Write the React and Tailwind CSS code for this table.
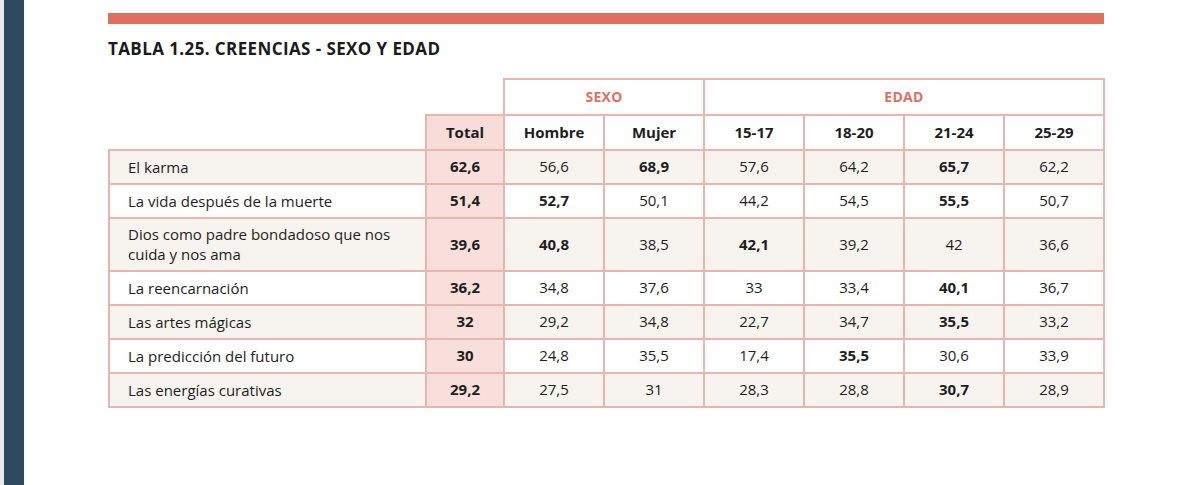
import React from 'react';

const rows = [
  { label: 'El karma', total: '62,6', vals: ['56,6', '68,9', '57,6', '64,2', '65,7', '62,2'], bold: [1, 4] },
  { label: 'La vida después de la muerte', total: '51,4', vals: ['52,7', '50,1', '44,2', '54,5', '55,5', '50,7'], bold: [0, 4] },
  { label: 'Dios como padre bondadoso que nos cuida y nos ama', total: '39,6', vals: ['40,8', '38,5', '42,1', '39,2', '42', '36,6'], bold: [0, 2], tall: true },
  { label: 'La reencarnación', total: '36,2', vals: ['34,8', '37,6', '33', '33,4', '40,1', '36,7'], bold: [4] },
  { label: 'Las artes mágicas', total: '32', vals: ['29,2', '34,8', '22,7', '34,7', '35,5', '33,2'], bold: [4] },
  { label: 'La predicción del futuro', total: '30', vals: ['24,8', '35,5', '17,4', '35,5', '30,6', '33,9'], bold: [3] },
  { label: 'Las energías curativas', total: '29,2', vals: ['27,5', '31', '28,3', '28,8', '30,7', '28,9'], bold: [4] },
];

const cols = ['Hombre', 'Mujer', '15-17', '18-20', '21-24', '25-29'];

export default function App() {
  return (
    <div className="w-[1200px] h-[485px] bg-white flex overflow-hidden" style={{ fontFamily: '"Open Sans", "Noto Sans", sans-serif' }}>
      <div className="w-[4px] bg-[#e9ecee]" />
      <div className="w-[20px] bg-[#2f4a5e]" />
      <div className="flex-1 pl-[84px] pt-[13px]">
        <div className="w-[996px] h-[11px] bg-[#df6f5f]" />
        <h2 className="mt-[12px] text-[17px] font-bold text-[#1b1b1b] tracking-[0.4px]">TABLA 1.25. CREENCIAS - SEXO Y EDAD</h2>
        <table className="mt-[16px] w-[995px] border-collapse text-[15px] text-[#1e1e1e] table-fixed">
          <colgroup>
            <col className="w-[317px]" />
            <col className="w-[78px]" />
            <col className="w-[100px]" />
            <col className="w-[100px]" />
            <col className="w-[100px]" />
            <col className="w-[100px]" />
            <col className="w-[100px]" />
            <col className="w-[100px]" />
          </colgroup>
          <thead>
            <tr className="h-[36px]">
              <th />
              <th />
              <th colSpan={2} className="border-2 border-[#e8b6ae] text-[#df6f5f] font-bold text-[14px] tracking-[0.3px]">SEXO</th>
              <th colSpan={4} className="border-2 border-[#e8b6ae] text-[#df6f5f] font-bold text-[14px] tracking-[0.3px]">EDAD</th>
            </tr>
            <tr className="h-[35px]">
              <th className="border-b-2 border-[#e8b6ae]" />
              {['Total', ...cols].map((c, i) => (
                <th key={c} className={`border-2 border-[#e8b6ae] font-bold text-[15px] ${i === 0 ? 'bg-[#f7dcd8]' : ''}`}>{c}</th>
              ))}
            </tr>
          </thead>
          <tbody>
            {rows.map((r, ri) => (
              <tr key={r.label} className={`${r.tall ? 'h-[53px]' : 'h-[34px]'} ${ri % 2 === 0 ? 'bg-[#f7f3ef]' : 'bg-white'}`}>
                <td className="border-2 border-[#e8b6ae] pl-[18px] pr-[20px] text-left leading-[20px]">{r.label}</td>
                <td className="border-2 border-[#e8b6ae] bg-[#f8dfdb] text-center font-bold">{r.total}</td>
                {r.vals.map((v, vi) => (
                  <td key={vi} className={`border-2 border-[#e8b6ae] text-center ${r.bold.includes(vi) ? 'font-bold' : ''}`}>{v}</td>
                ))}
              </tr>
            ))}
          </tbody>
        </table>
      </div>
    </div>
  );
}
